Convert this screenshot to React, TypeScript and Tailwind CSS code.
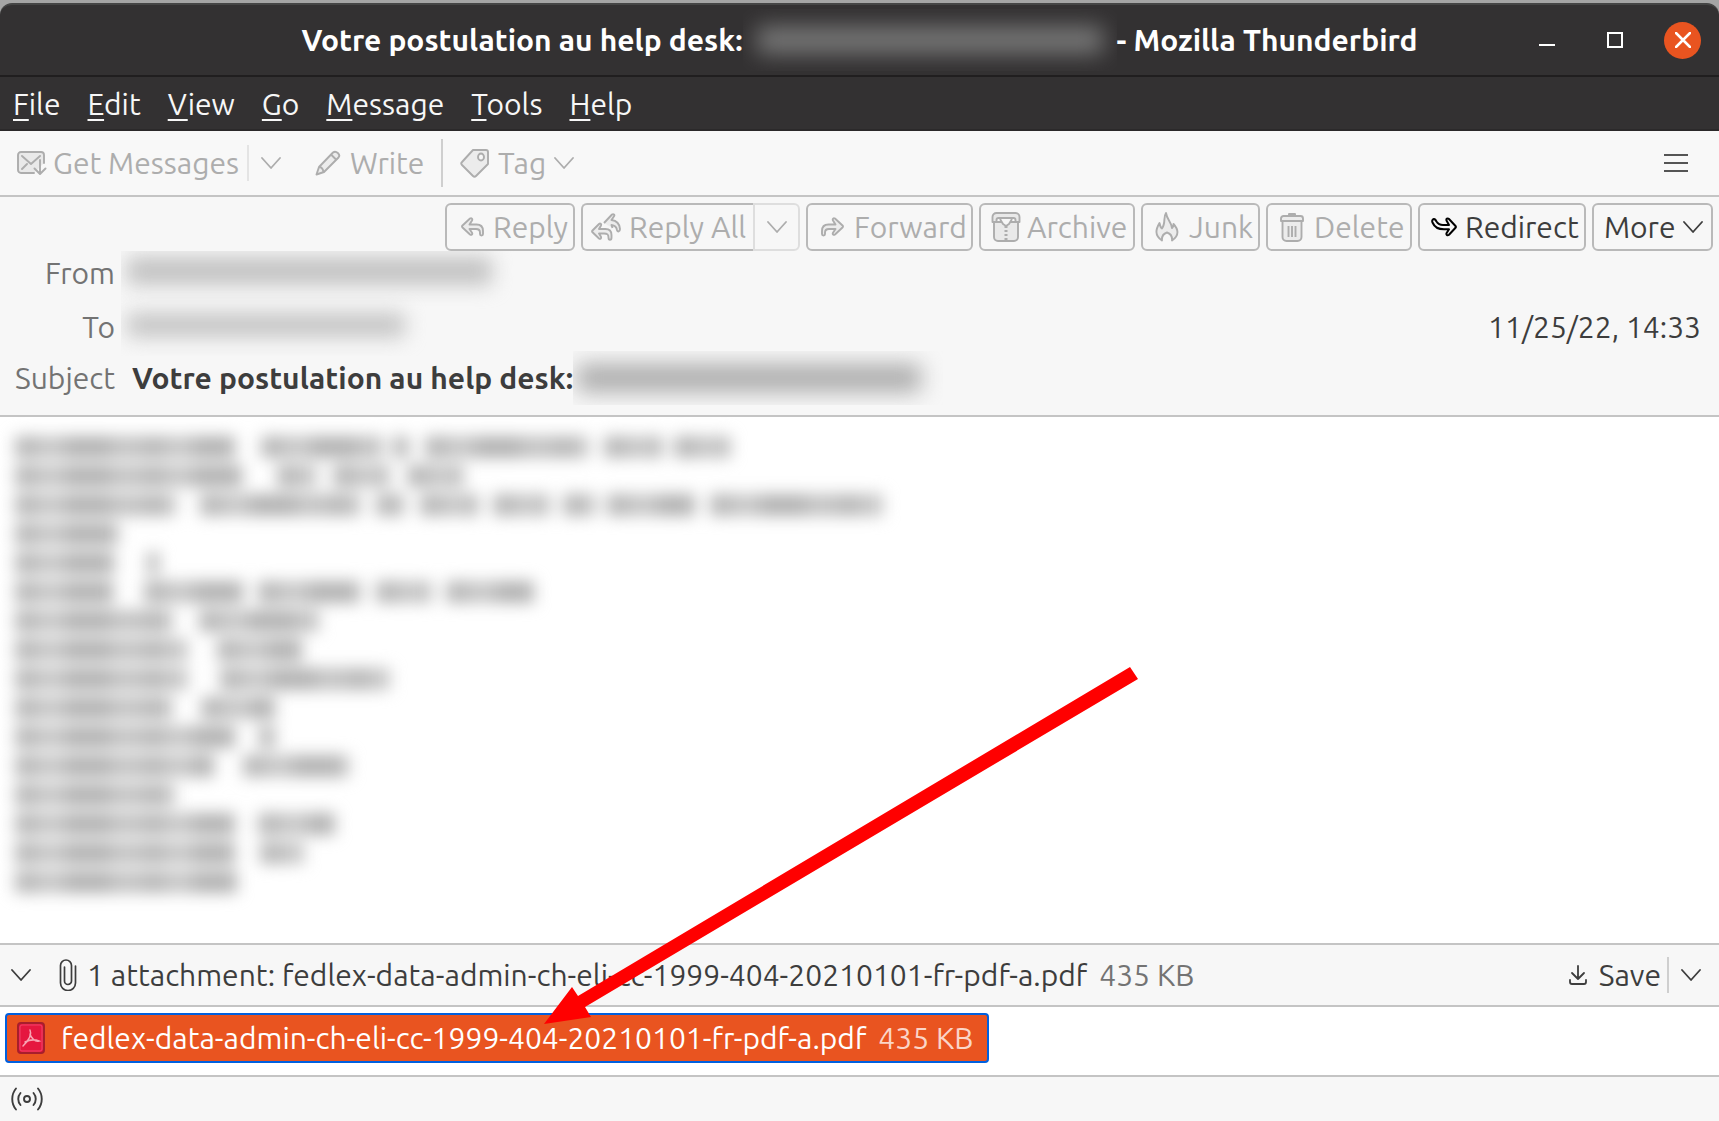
import React from "react";

type IconProps = { className?: string };

const Chevron = ({ className = "" }: IconProps) => (
  <svg className={`h-3 w-5 shrink-0 ${className}`} viewBox="0 0 20 12" fill="none" stroke="currentColor" strokeWidth="1.8" strokeLinecap="round" strokeLinejoin="round">
    <path d="M1 1l9 10 9-10" />
  </svg>
);

const GetMessagesIcon = () => (
  <svg className="h-6 w-[30px] shrink-0" viewBox="0 0 30 24" fill="none" stroke="currentColor" strokeWidth="1.9" strokeLinecap="round" strokeLinejoin="round">
    <path d="M17 22H4a3 3 0 0 1-3-3V4a3 3 0 0 1 3-3h20a3 3 0 0 1 3 3v8" fill="#e9e9e9" />
    <path d="M5 5l9 8 9-8M5 18l5-5M23 9v13M17.500 17.500L23 23l5.500-5.500" />
  </svg>
);

const PencilIcon = () => (
  <svg className="h-[26px] w-[26px] shrink-0" viewBox="0 0 26 26" fill="#ececec" stroke="currentColor" strokeWidth="1.9" strokeLinejoin="round">
    <path d="M1.500 24.500L4 17 18 2.500c3-2.500 8 2 5.500 5L9 22z" />
    <path d="M4 17c2 0 4 2 4.500 5M16 4.500l5 5" fill="none" />
  </svg>
);

const TagIcon = () => (
  <svg className="h-[30px] w-[30px] shrink-0" viewBox="0 0 30 30" fill="#ececec" stroke="currentColor" strokeWidth="1.9" strokeLinejoin="round">
    <path d="M13 2h13a2 2 0 0 1 2 2v12L16 28c-1 1-2 1-3 0L2 17c-1-1-1-2 0-3z" />
    <ellipse cx="21" cy="9" rx="3" ry="3.500" fill="#f7f7f7" />
  </svg>
);

const ReplyIcon = () => (
  <svg className="h-5 w-6 shrink-0" viewBox="0 0 24 20" fill="#ececec" stroke="currentColor" strokeWidth="1.9" strokeLinejoin="round">
    <path d="M9 1.500L1.500 8.500c-.7.700-.7 1.300 0 2L9 17.500c1.500 1 2.800-.3 2-1.800L8.500 12H15c3 0 4 1 4 3.500V17c0 2 3 2 3 0v-3c0-4-2.500-6.500-6.500-6.500h-7L11 3.500c.8-1.500-.5-3-2-2z" />
  </svg>
);

const ReplyAllIcon = () => (
  <svg className="h-7 w-[30px] shrink-0" viewBox="0 0 30 28" fill="#ececec" stroke="currentColor" strokeWidth="1.9" strokeLinejoin="round">
    <path d="M13 10l8-8.500c1.500-1 3 .3 2 1.800L20.500 7c5 .5 8 3.500 8.500 9 0 2.500-2.500 3.500-3 1-.5-3-2-4.500-5.500-5l1 3" />
    <path d="M8 11l-6.500 6.500c-.6.600-.6 1.200 0 1.800L8 25.500c1.400 1 2.600-.3 2-1.700L8 20.500h5c3.500 0 4.500 1 4.500 4 0 3 3 3 3 0V22c0-4-2-6-6-6H8l2-3.500c.7-1.400-.7-2.500-2-1.500z" />
  </svg>
);

const ForwardIcon = () => (
  <svg className="h-5 w-6 shrink-0" viewBox="0 0 24 20" fill="#ececec" stroke="currentColor" strokeWidth="1.900" strokeLinejoin="round">
    <path d="M15 1.500l7.500 7c.7.700.7 1.300 0 2l-7.500 7c-1.500 1-2.800-.3-2-1.800l2.500-3.700H9c-3 0-4 1-4 3.500V17c0 2-3 2-3 0v-3c0-4 2.500-6.500 6.500-6.500h7L13 3.500c-.8-1.500.5-3 2-2z" />
  </svg>
);

const ArchiveIcon = () => (
  <svg className="h-[30px] w-[30px] shrink-0" viewBox="0 0 30 30" fill="#e9e9e9" stroke="currentColor" strokeWidth="1.900" strokeLinejoin="round">
    <path d="M3 10v15a4 4 0 0 0 4 4h16a4 4 0 0 0 4-4V10z" />
    <path d="M1.500 10V5a4 4 0 0 1 4-4h19a4 4 0 0 1 4 4v5h-4V8a2 2 0 0 0-2-2h-15a2 2 0 0 0-2 2v2z" />
    <path d="M9 7l3 5 3 2 3-2 3-5" fill="#f7f7f7" />
    <path d="M15 14v14" strokeDasharray="2 2" strokeWidth="3" />
  </svg>
);

const JunkIcon = () => (
  <svg className="h-[30px] w-6 shrink-0" viewBox="0 0 24 30" fill="#ececec" stroke="currentColor" strokeWidth="1.900" strokeLinejoin="round">
    <path d="M7 28.500C-1 23 1 17 4.500 11c.5 3 1 4.500 2.500 5.500C11 11 8 5 11 1c1 7 5 8 6 15 1-1 1.500-2 1.500-4C23 17 25 23 17 28.500c.5-5-2-7-5-8-3 1-5.500 3-5 8z" />
  </svg>
);

const TrashIcon = () => (
  <svg className="h-[30px] w-6 shrink-0" viewBox="0 0 24 30" fill="#ececec" stroke="currentColor" strokeWidth="1.900" strokeLinejoin="round">
    <path d="M2.500 9v16a4 4 0 0 0 4 4h11a4 4 0 0 0 4-4V9z" />
    <path d="M1 9V6.500A2.500 2.500 0 0 1 3.500 4h17A2.500 2.500 0 0 1 23 6.500V9z" />
    <path d="M9 3.500V2h6v1.500M8.500 14v11M12 14v11M15.500 14v11" fill="none" />
  </svg>
);

const RedirectIcon = () => (
  <svg className="h-5 w-[26px] shrink-0" viewBox="0 0 26 20" fill="#f7f7f7" stroke="#000" strokeWidth="2" strokeLinejoin="round">
    <path d="M1.500 3c1.500-2 3-.5 4 1.500C7 7 9 8 12 8h6l-2.500-4.500c-.6-1.500 1-2.800 2.500-1.500l6.500 7c.5.600.5 1.200 0 1.800l-6.500 7c-1.500 1.200-3 0-2.500-1.500l2.500-4h-5C7 12.300 3 9 1.500 5.500 1 4.500 1 4 1.500 3z" />
  </svg>
);

const PaperclipIcon = () => (
  <svg className="h-8 w-[18px] shrink-0" viewBox="0 0 18 32" fill="none" stroke="currentColor" strokeWidth="1.700" strokeLinecap="round">
    <path d="M16.500 7v17a7.500 7.500 0 0 1-15 0V6.500a5.500 5.500 0 0 1 11 0V22a3.500 3.500 0 0 1-7 0V8" />
  </svg>
);

const SaveIcon = () => (
  <svg className="h-5 w-[18px] shrink-0" viewBox="0 0 18 20" fill="none" stroke="currentColor" strokeWidth="1.800" strokeLinecap="round" strokeLinejoin="round">
    <path d="M9 1v13M3 8l6 6 6-6M1 15v2a2 2 0 0 0 2 2h12a2 2 0 0 0 2-2v-2" />
  </svg>
);

const PdfIcon = () => (
  <svg className="h-8 w-7 shrink-0" viewBox="0 0 28 32">
    <rect x="1" y="1" width="26" height="30" rx="3" fill="#e5173f" stroke="#a81e2c" strokeWidth="2" />
    <rect x="3" y="3" width="22" height="26" rx="2" fill="none" stroke="#f2456a" strokeWidth="1" />
    <path d="M13 8c2 4-1 10-7 16M13 12c1 4 5 8 9 7-5-2-10-1-14 1" fill="none" stroke="#f7a5b4" strokeWidth="1.500" strokeLinecap="round" />
  </svg>
);

const OnlineIcon = () => (
  <svg className="h-6 w-8 shrink-0" viewBox="0 0 32 24" fill="none" stroke="currentColor" strokeWidth="1.900" strokeLinecap="round">
    <circle cx="16" cy="12" r="3" />
    <path d="M9.500 6c-3 3.500-3 8.500 0 12M22.500 6c3 3.500 3 8.500 0 12M5 1.500c-5 6-5 15 0 21M27 1.500c5 6 5 15 0 21" />
  </svg>
);

const menus = ["File", "Edit", "View", "Go", "Message", "Tools", "Help"];

/* Runs of hidden words in the message body: alternating gap and width. */
const hiddenLines: number[][] = [
  [4, 220, 26, 122, 10, 16, 16, 164, 15, 58, 12, 56],
  [4, 228, 34, 40, 16, 56, 18, 56],
  [4, 161, 24, 161, 15, 29, 15, 58, 15, 56, 14, 33, 11, 88, 15, 173],
  [4, 104],
  [4, 100, 32, 12],
  [4, 99, 30, 100, 14, 103, 15, 55, 15, 88],
  [4, 158, 26, 120],
  [4, 173, 29, 85],
  [4, 173, 32, 170],
  [4, 158, 28, 74],
  [4, 220, 24, 16],
  [4, 199, 29, 106],
  [4, 160],
  [4, 220, 23, 77],
  [4, 220, 25, 44],
  [4, 222],
];

const HiddenText = ({ runs, className }: { runs: number[]; className: string }) => (
  <div className="flex h-[29px] items-center">
    {runs.map((w, i) => (
      <span key={i} className={i % 2 ? className : "shrink-0"} style={{ width: w }} />
    ))}
  </div>
);

const mailButton =
  "flex h-12 shrink-0 items-center rounded-md border-2 border-[#b9b9b9] text-[#adadad] whitespace-nowrap";

const fileName = "fedlex-data-admin-ch-eli-cc-1999-404-20210101-fr-pdf-a.pdf";

export default function App() {
  return (
    <div className="relative flex min-h-screen flex-col overflow-hidden bg-[#a5a5a5] pt-[3px] font-['Ubuntu','Noto_Sans',sans-serif] text-[30px] leading-9 text-[#3d3d3d]">
      <header className="grid h-[74px] shrink-0 grid-cols-[1fr_auto_1fr] items-center rounded-t-xl border-t-2 border-b-2 border-t-[#454545] border-b-[#201e1f] bg-[#333132] text-white">
        <span />
        <h1 className="flex items-center font-bold whitespace-nowrap">
          Votre postulation au help desk:
          <span className="flex h-[62px] w-[374px] items-center justify-center overflow-hidden">
            <span className="h-7 w-[346px] rounded bg-[#767676] blur-[11px]" />
          </span>
          - Mozilla Thunderbird
        </h1>
        <div className="flex items-center justify-self-end pr-[18px]">
          <button aria-label="Minimize" className="flex h-10 w-10 items-center justify-center">
            <svg className="h-4 w-4" viewBox="0 0 16 16"><path d="M0 13h16" stroke="#fff" strokeWidth="2" /></svg>
          </button>
          <button aria-label="Maximize" className="ml-7 flex h-10 w-10 items-center justify-center">
            <span className="h-4 w-4 border-2 border-white" />
          </button>
          <button aria-label="Close" className="ml-[29px] flex h-[37px] w-[37px] items-center justify-center rounded-full bg-[#e95420]">
            <svg className="h-4 w-4" viewBox="0 0 16 16"><path d="M1 1l14 14M15 1L1 15" stroke="#fff" strokeWidth="2.500" strokeLinecap="round" /></svg>
          </button>
        </div>
      </header>

      <nav className="flex h-[54px] shrink-0 items-center gap-[27px] border-b-2 border-[#2b292a] bg-[#333132] pt-[2px] pl-[13px] text-[#f7f7f7]">
        {menus.map((m) => (
          <button key={m}>
            <span className="underline decoration-2 underline-offset-4">{m[0]}</span>
            {m.slice(1)}
          </button>
        ))}
      </nav>

      <div className="flex h-[66px] shrink-0 items-center border-b-2 border-[#c4c4c4] bg-[#f8f8f8] pl-[17px] text-[#adadad]">
        <button className="flex w-[230px] items-center gap-[6px] whitespace-nowrap">
          <GetMessagesIcon />Get Messages
        </button>
        <button aria-label="Get messages options" className="flex h-9 items-center border-l-2 border-[#e4e4e4] pl-3">
          <Chevron />
        </button>
        <button className="ml-[34px] flex w-[126px] items-center gap-[9px]">
          <PencilIcon />Write
        </button>
        <span className="h-12 w-[2px] bg-[#cfcfcf]" />
        <button className="ml-[17px] flex items-center gap-2">
          <TagIcon />Tag<Chevron />
        </button>
        <button aria-label="Application menu" className="mr-[31px] ml-auto flex w-6 flex-col gap-[6px] py-2">
          <span className="h-[2px] w-full bg-[#555]" />
          <span className="h-[2px] w-full bg-[#555]" />
          <span className="h-[2px] w-full bg-[#555]" />
        </button>
      </div>

      <section className="flex h-[220px] shrink-0 flex-col border-b-2 border-[#c4c4c4] bg-[#f7f7f7] pt-[6px]">
        <div className="flex justify-end gap-[6px] pr-[6px]">
          <button className={`${mailButton} w-[130px] gap-2 pl-[14px]`}><ReplyIcon />Reply</button>
          <div className="flex">
            <button className={`${mailButton} w-[172px] gap-2 rounded-r-none border-r-0 pl-2`}><ReplyAllIcon />Reply All</button>
            <button aria-label="Reply options" className="flex h-12 w-[47px] items-center justify-center rounded-r-md border-2 border-[#dedede] text-[#adadad]"><Chevron /></button>
          </div>
          <button className={`${mailButton} w-[167px] gap-[10px] pl-3`}><ForwardIcon />Forward</button>
          <button className={`${mailButton} w-[156px] gap-[6px] pl-[10px]`}><ArchiveIcon />Archive</button>
          <button className={`${mailButton} w-[119px] gap-[10px] pl-3`}><JunkIcon />Junk</button>
          <button className={`${mailButton} w-[146px] gap-[10px] pl-3`}><TrashIcon />Delete</button>
          <button className={`${mailButton} w-[168px] gap-2 pl-[11px] text-[#3d3d3d]!`}><RedirectIcon />Redirect</button>
          <button className={`${mailButton} w-[121px] justify-between pr-2 pl-[10px] text-[#3d3d3d]!`}>More<Chevron /></button>
        </div>
        <div className="flex">
          <div className="w-[115px] shrink-0 text-right text-[#737373]">
            <div className="h-[54px] pt-1">From</div>
            <div className="h-[51px] pt-1">To</div>
          </div>
          <div className="ml-[6px] h-[105px] w-[410px] overflow-hidden">
            <div className="mt-[6px] ml-[6px] h-7 w-[365px] rounded bg-[#c2c2c2] blur-[10px]" />
            <div className="mt-7 ml-[6px] h-6 w-[278px] rounded bg-[#c4c4c4] blur-[10px]" />
          </div>
          <time className="mt-[58px] mr-[18px] ml-auto">11/25/22, 14:33</time>
        </div>
        <div className="flex h-11 items-center">
          <span className="w-[115px] shrink-0 text-right text-[#737373]">Subject</span>
          <strong className="ml-[17px] shrink-0">Votre postulation au help desk:</strong>
          <span className="flex h-[54px] w-[370px] items-center overflow-hidden pl-1">
            <span className="h-7 w-[344px] rounded bg-[#acacac] blur-[11px]" />
          </span>
        </div>
      </section>

      <main className="flex-1 bg-white pt-[15px] pl-[11px]">
        <div aria-label="Hidden message text" className="blur-[8px]">
          {hiddenLines.map((runs, i) => (
            <HiddenText
              key={i}
              runs={runs}
              className="h-[22px] shrink-0 bg-[repeating-linear-gradient(90deg,#b8b8b8_0px_22px,#c6c6c6_22px_50px,#b2b2b2_50px_96px,#c2c2c2_96px_128px)]"
            />
          ))}
        </div>
      </main>

      <div className="flex h-16 shrink-0 items-center border-y-2 border-[#c4c4c4] bg-[#f7f7f7] pr-[18px] pl-[11px]">
        <button aria-label="Toggle attachment list" className="mr-7 py-2"><Chevron /></button>
        <PaperclipIcon />
        <span className="ml-[10px] whitespace-nowrap">1 attachment: {fileName}</span>
        <span className="ml-3 whitespace-nowrap text-[#737373]">435 KB</span>
        <button className="ml-auto flex items-center gap-3 pr-[6px]"><SaveIcon />Save</button>
        <button aria-label="Save options" className="flex h-9 items-center border-l-2 border-[#cfcfcf] pl-3"><Chevron /></button>
      </div>

      <div className="h-[68px] shrink-0 bg-white pt-[6px] pl-[5px]">
        <button className="flex h-[50px] w-[984px] items-center rounded border-2 border-[#0060df] bg-[#e95420] pl-[10px] whitespace-nowrap text-white">
          <PdfIcon />
          <span className="ml-4">{fileName}</span>
          <span className="ml-3 text-[#fbd5c8]">435 KB</span>
        </button>
      </div>

      <footer className="flex h-[46px] shrink-0 items-center border-t-2 border-[#c4c4c4] bg-[#f7f7f7] pl-[11px]">
        <button aria-label="Online status"><OnlineIcon /></button>
      </footer>

      <svg className="pointer-events-none absolute top-[667px] left-[544px] h-[358px] w-[594px]" viewBox="0 0 594 358" fill="#f00">
        <path d="M0 357L28 320l6 9L586 0l8 12L41 340l6 10z" />
      </svg>
    </div>
  );
}
